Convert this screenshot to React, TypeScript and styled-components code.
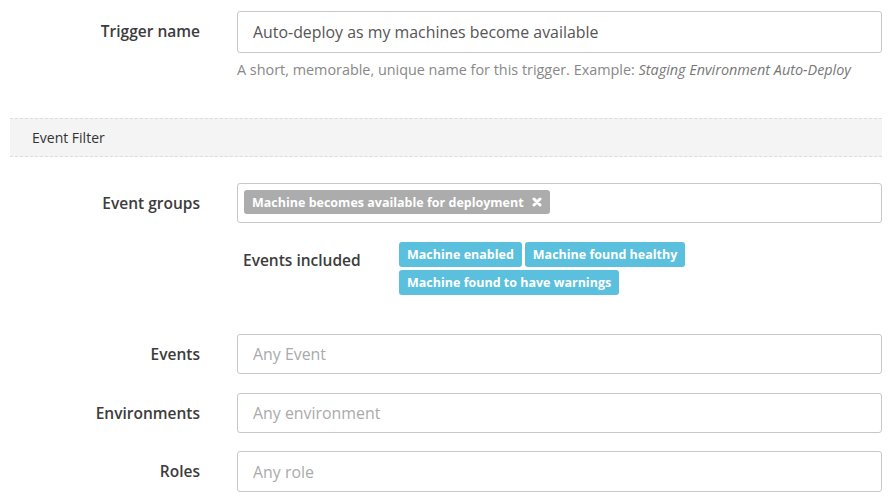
import React from "react";
import styled, { createGlobalStyle } from "styled-components";

const GlobalStyle = createGlobalStyle`
  body {
    margin: 0;
    background: #fff;
    font-family: "Open Sans", "Noto Sans", Arial, sans-serif;
    color: #333;
  }
`;

const Page = styled.div`
  padding: 11px 10px 0 10px;
  width: 872px;
`;

const FormRow = styled.div<{ $top?: number }>`
  display: grid;
  grid-template-columns: 227px 1fr;
  margin-top: ${(p) => p.$top ?? 0}px;
`;

const Label = styled.label`
  height: 40px;
  display: flex;
  align-items: center;
  justify-content: flex-end;
  padding-right: 37px;
  font-size: 15.5px;
  font-weight: 600;
  color: #3c3c3c;
`;

const Field = styled.div`
  display: flex;
  flex-direction: column;
`;

const Input = styled.input<{ $h?: number }>`
  box-sizing: border-box;
  width: 100%;
  height: ${(p) => p.$h ?? 40}px;
  border: 1px solid #c8c8c8;
  border-radius: 3px;
  padding: 0 15px;
  font-family: inherit;
  font-size: 15.9px;
  color: #555;
  outline: none;
  &::placeholder {
    color: #aaa;
  }
`;

const Help = styled.p`
  margin: 7px 0 0;
  font-size: 14.4px;
  line-height: 20px;
  color: #888;
  em {
    color: #777;
  }
`;

const Band = styled.div`
  margin-top: 38px;
  border-top: 1px dashed #ddd;
  border-bottom: 1px dashed #ddd;
  background: #f4f4f4;
  padding: 9px 22px;
  line-height: 19px;
  font-size: 14px;
  color: #333;
`;

const TagBox = styled.div`
  box-sizing: border-box;
  height: 40px;
  border: 1px solid #c8c8c8;
  border-radius: 3px;
  padding: 6px;
  display: flex;
  align-items: flex-start;
`;

const Chip = styled.span<{ $tone: "grey" | "blue" }>`
  display: inline-flex;
  align-items: center;
  gap: 8px;
  height: ${(p) => (p.$tone === "grey" ? 24 : 25)}px;
  padding: 0 8px;
  border-radius: 3px;
  background: ${(p) => (p.$tone === "grey" ? "#acacac" : "#5bc0de")};
  color: #fff;
  font-size: 12.5px;
  font-weight: 700;
  white-space: nowrap;
`;

const Included = styled.div`
  display: grid;
  grid-template-columns: 156px 1fr;
  margin-top: 19px;
  padding-left: 6px;
`;

const IncludedLabel = styled.span`
  font-size: 15.5px;
  font-weight: 600;
  color: #3c3c3c;
  padding-top: 7px;
`;

const ChipWrap = styled.div`
  display: flex;
  flex-wrap: wrap;
  gap: 3px;
  width: 290px;
`;

const Cross = () => (
  <svg width="10" height="10" viewBox="0 0 10 10">
    <path d="M2 2 L8 8 M8 2 L2 8" stroke="#fff" strokeWidth="3" strokeLinecap="round" />
  </svg>
);

const App = () => {
  const events = ["Machine enabled", "Machine found healthy", "Machine found to have warnings"];
  return (
    <Page>
      <GlobalStyle />
      <FormRow>
        <Label>Trigger name</Label>
        <Field>
          <Input $h={42} defaultValue="Auto-deploy as my machines become available" />
          <Help>
            A short, memorable, unique name for this trigger. Example: <em>Staging Environment Auto-Deploy</em>
          </Help>
        </Field>
      </FormRow>

      <Band>Event Filter</Band>

      <FormRow $top={26}>
        <Label>Event groups</Label>
        <Field>
          <TagBox>
            <Chip $tone="grey">
              Machine becomes available for deployment <Cross />
            </Chip>
          </TagBox>
          <Included>
            <IncludedLabel>Events included</IncludedLabel>
            <ChipWrap>
              {events.map((e) => (
                <Chip key={e} $tone="blue">
                  {e}
                </Chip>
              ))}
            </ChipWrap>
          </Included>
        </Field>
      </FormRow>

      <FormRow $top={39}>
        <Label>Events</Label>
        <Input placeholder="Any Event" />
      </FormRow>
      <FormRow $top={19}>
        <Label>Environments</Label>
        <Input placeholder="Any environment" />
      </FormRow>
      <FormRow $top={18}>
        <Label>Roles</Label>
        <Input $h={41} placeholder="Any role" />
      </FormRow>
    </Page>
  );
};

export default App;
